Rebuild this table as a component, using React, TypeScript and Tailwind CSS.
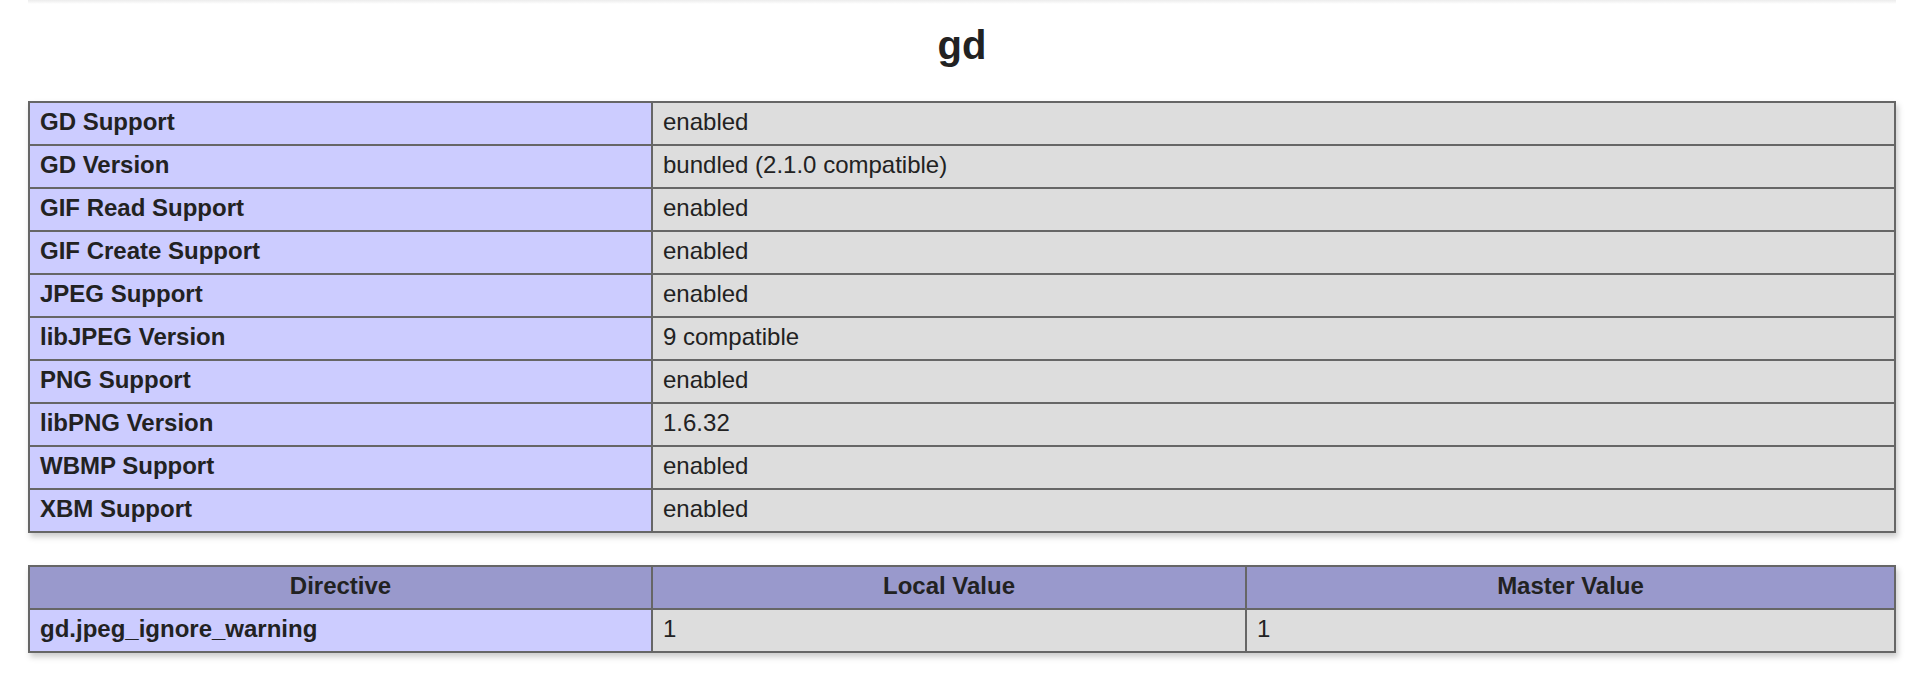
import React from "react";

const gdRows: [string, string][] = [
  ["GD Support", "enabled"],
  ["GD Version", "bundled (2.1.0 compatible)"],
  ["GIF Read Support", "enabled"],
  ["GIF Create Support", "enabled"],
  ["JPEG Support", "enabled"],
  ["libJPEG Version", "9 compatible"],
  ["PNG Support", "enabled"],
  ["libPNG Version", "1.6.32"],
  ["WBMP Support", "enabled"],
  ["XBM Support", "enabled"],
];

const directives: [string, string, string][] = [["gd.jpeg_ignore_warning", "1", "1"]];

const cell =
  "border-2 border-[#666] pt-[6px] pb-[10px] px-[10px] leading-[25px] text-[24px] align-baseline";

const App = () => {
  return (
    <div className="min-h-[674px] bg-white text-[#222] font-['Liberation_Sans',Arial,sans-serif]">
      <div className="mx-auto w-[1868px] h-[4px] bg-gradient-to-b from-[#ececec] to-white" />
      <h2 className="mt-[18px] text-center text-[40px] leading-[46px] font-bold">gd</h2>

      <table className="mx-auto mt-[33px] w-[1868px] table-fixed border-collapse shadow-[2px_4px_6px_#ccc]">
        <colgroup>
          <col className="w-[623px]" />
          <col />
        </colgroup>
        <tbody>
          {gdRows.map(([label, value]) => (
            <tr key={label}>
              <td className={`${cell} bg-[#ccf] font-bold`}>{label}</td>
              <td className={`${cell} bg-[#ddd]`}>{value}</td>
            </tr>
          ))}
        </tbody>
      </table>

      <table className="mx-auto mt-[32px] w-[1868px] table-fixed border-collapse shadow-[2px_4px_6px_#ccc]">
        <colgroup>
          <col className="w-[623px]" />
          <col className="w-[594px]" />
          <col />
        </colgroup>
        <thead>
          <tr>
            <th className={`${cell} bg-[#99c] font-bold text-center`}>Directive</th>
            <th className={`${cell} bg-[#99c] font-bold text-center`}>Local Value</th>
            <th className={`${cell} bg-[#99c] font-bold text-center`}>Master Value</th>
          </tr>
        </thead>
        <tbody>
          {directives.map(([name, local, master]) => (
            <tr key={name}>
              <td className={`${cell} bg-[#ccf] font-bold`}>{name}</td>
              <td className={`${cell} bg-[#ddd]`}>{local}</td>
              <td className={`${cell} bg-[#ddd]`}>{master}</td>
            </tr>
          ))}
        </tbody>
      </table>
    </div>
  );
};

export default App;
